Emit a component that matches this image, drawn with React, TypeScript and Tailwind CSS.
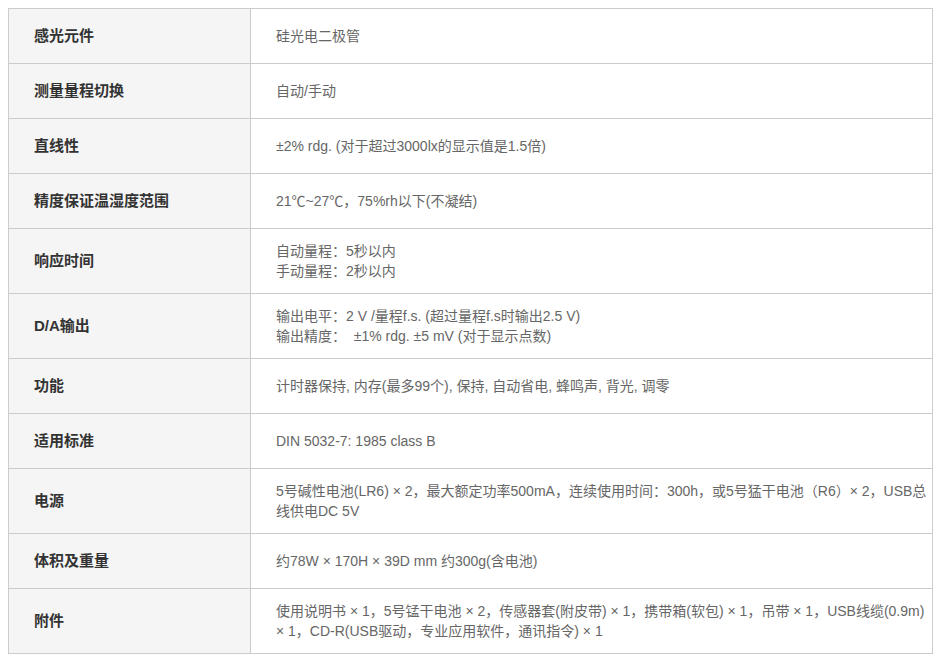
const rows: { label: string; lines: string[] }[] = [
  { label: '感光元件', lines: ['硅光电二极管'] },
  { label: '测量量程切换', lines: ['自动/手动'] },
  { label: '直线性', lines: ['±2% rdg. (对于超过3000lx的显示值是1.5倍)'] },
  { label: '精度保证温湿度范围', lines: ['21℃~27℃，75%rh以下(不凝结)'] },
  { label: '响应时间', lines: ['自动量程：5秒以内', '手动量程：2秒以内'] },
  {
    label: 'D/A输出',
    lines: ['输出电平：2 V /量程f.s. (超过量程f.s时输出2.5 V)', '输出精度：  ±1% rdg. ±5 mV (对于显示点数)'],
  },
  { label: '功能', lines: ['计时器保持, 内存(最多99个), 保持, 自动省电, 蜂鸣声, 背光, 调零'] },
  { label: '适用标准', lines: ['DIN 5032-7: 1985 class B'] },
  {
    label: '电源',
    lines: [
      '5号碱性电池(LR6) × 2，最大额定功率500mA，连续使用时间：300h，或5号猛干电池（R6）× 2，USB总',
      '线供电DC 5V',
    ],
  },
  { label: '体积及重量', lines: ['约78W × 170H × 39D mm 约300g(含电池)'] },
  {
    label: '附件',
    lines: [
      '使用说明书 × 1，5号锰干电池 × 2，传感器套(附皮带) × 1，携带箱(软包) × 1，吊带 × 1，USB线缆(0.9m)',
      '× 1，CD-R(USB驱动，专业应用软件，通讯指令) × 1',
    ],
  },
];

export default function App() {
  return (
    <div className="min-h-screen bg-white p-2" style={{ fontFamily: '"Liberation Sans", "Noto Sans CJK SC", sans-serif' }}>
      {/* Spec table */}
      <table className="w-[925px] table-fixed border-collapse">
        <colgroup>
          <col className="w-[242px]" />
          <col />
        </colgroup>
        <tbody>
          {rows.map((row) => (
            <tr key={row.label} className={row.lines.length > 1 ? 'h-[65px]' : 'h-[55px]'}>
              <td className="border border-[#cccccc] bg-[#f5f5f5] pl-[25px] align-middle text-[15px] font-bold text-[#333333]">
                {row.label}
              </td>
              <td className="border border-[#cccccc] pl-[25px] pr-1 align-middle text-[14px] leading-5 text-[#666666]">
                {row.lines.map((line, i) => (
                  <div key={i} className="whitespace-pre">
                    {line}
                  </div>
                ))}
              </td>
            </tr>
          ))}
        </tbody>
      </table>
    </div>
  );
}
